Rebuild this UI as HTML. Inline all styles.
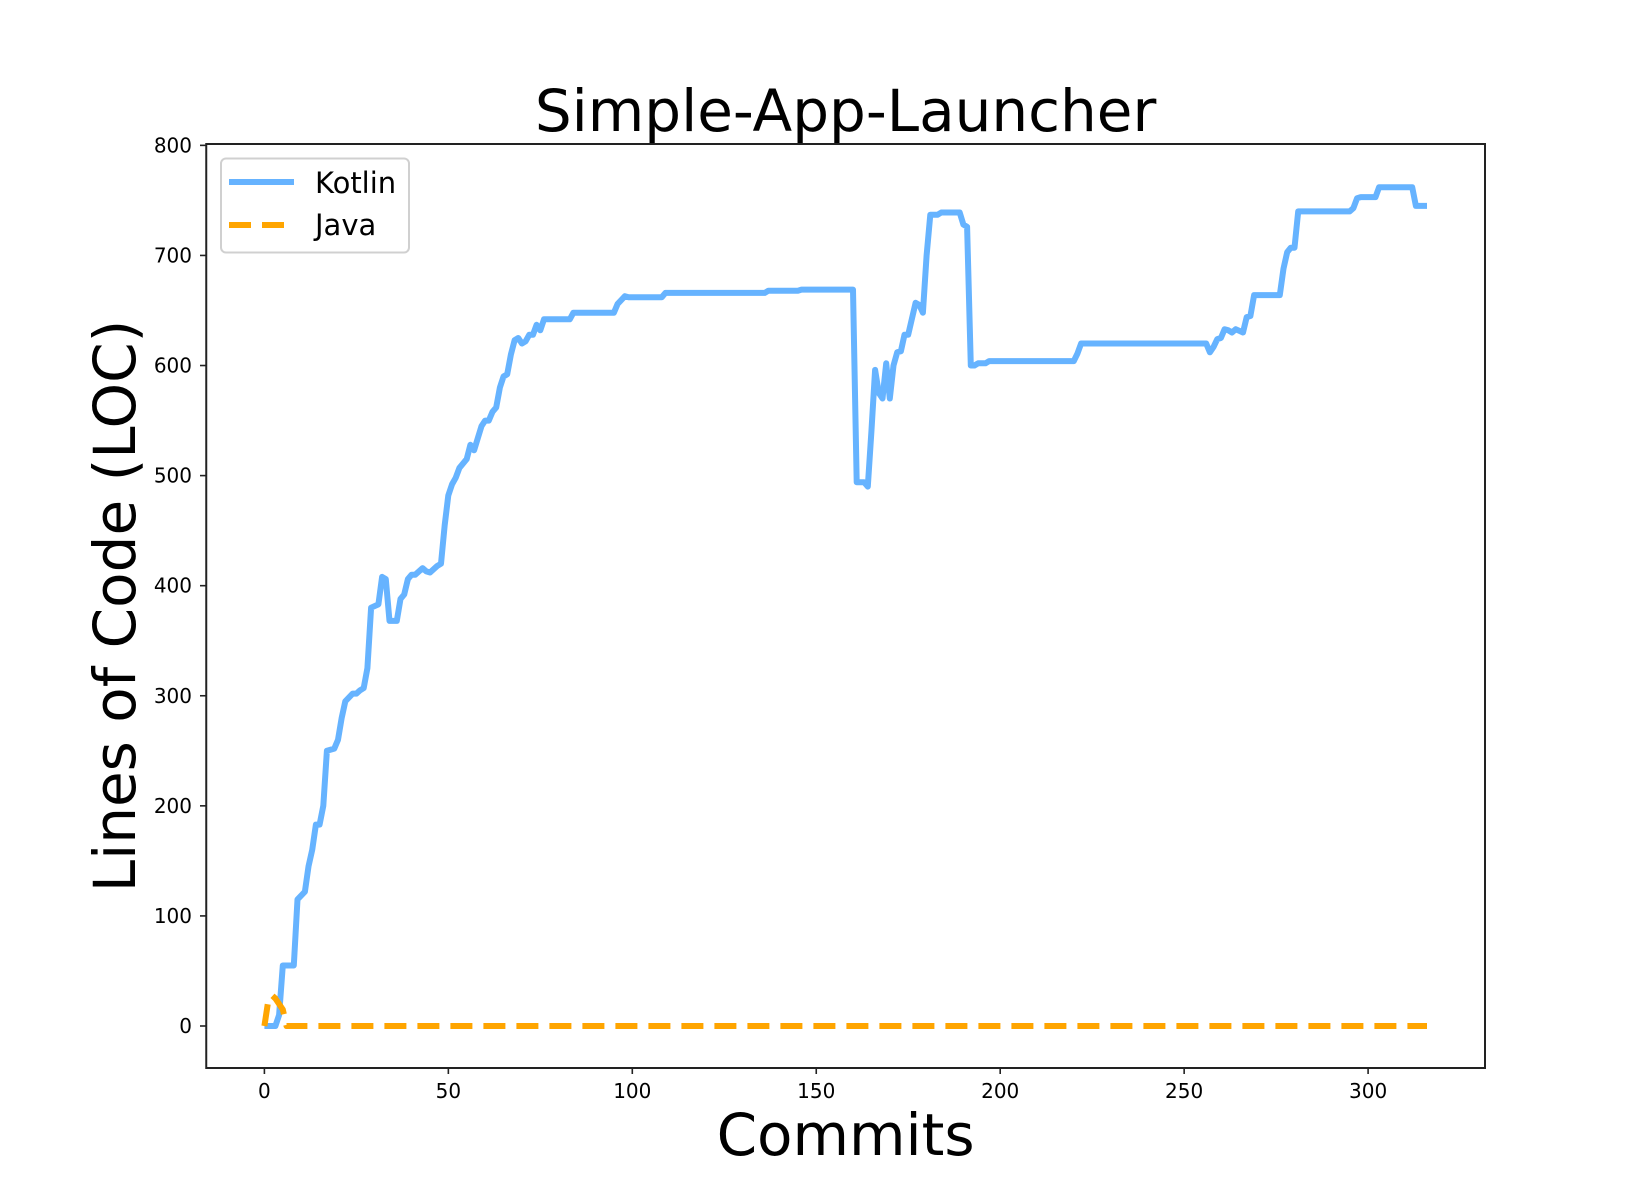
<!DOCTYPE html>
<html><head><meta charset="utf-8"><style>
html,body{margin:0;padding:0;background:#fff;width:1650px;height:1200px;overflow:hidden}
svg text{font-family:"DejaVu Sans","Liberation Sans",sans-serif;fill:#000}
</style></head><body>
<svg id="s" width="1650" height="1200" xmlns="http://www.w3.org/2000/svg">
<rect width="1650" height="1200" fill="#fff"/>
<g id="plot"></g>
<rect x="206.25" y="144" width="1278.75" height="924" fill="none" stroke="#222" stroke-width="2"/>
<g id="ticks"></g>
<text x="845.6" y="131" font-size="58" text-anchor="middle">Simple-App-Launcher</text>
<text x="845.6" y="1155" font-size="58" text-anchor="middle">Commits</text>
<text transform="translate(135,606) rotate(-90)" font-size="58" text-anchor="middle">Lines of Code (LOC)</text>
<rect x="221" y="158.5" width="188" height="94" rx="5" fill="#fff" fill-opacity="0.8" stroke="#d0d0d0" stroke-width="2"/>
<line x1="229" y1="182" x2="294" y2="182" stroke="#66b3ff" stroke-width="6"/>
<line x1="229" y1="225" x2="294" y2="225" stroke="#ffa500" stroke-width="6" stroke-dasharray="22 11"/>
<text x="315" y="193" font-size="29">Kotlin</text>
<text x="315" y="235" font-size="29">Java</text>
</svg>
<script>
var X=function(v){return 264.4+v*3.679},Y=function(v){return 1026-v*1.1008};
var k=[[0,0],[3,0],[4,10],[5,55],[8,55],[9,115],[11,122],[12,145],[13,160],[14,183],[15,183],[16,200],[17,250],[19,252],[20,260],[21,280],[22,295],[24,302],[25,302],[26,305],[27,307],[28,325],[29,380],[31,383],[32,408],[33,406],[34,368],[36,368],[37,388],[38,392],[39,406],[40,410],[41,410],[43,416],[44,413],[45,412],[47,418],[48,420],[49,455],[50,482],[51,492],[52,498],[53,507],[55,515],[56,528],[57,523],[59,545],[60,550],[61,550],[62,558],[63,562],[64,580],[65,590],[66,592],[67,610],[68,623],[69,625],[70,620],[71,622],[72,628],[73,628],[74,637],[75,632],[76,642],[83,642],[84,648],[95,648],[96,656],[98,663],[99,662],[108,662],[109,666],[136,666],[137,668],[145,668],[146,669],[160,669],[161,494],[163,494],[164,490],[165,540],[166,596],[167,575],[168,570],[169,602],[170,570],[171,600],[172,612],[173,613],[174,628],[175,628],[177,657],[178,655],[179,648],[180,700],[181,737],[183,737],[184,739],[189,739],[190,728],[191,726],[192,600],[193,600],[194,602],[196,602],[197,604],[220,604],[221,611],[222,620],[256,620],[257,612],[258,617],[259,624],[260,625],[261,633],[262,632],[263,630],[264,633],[266,630],[267,644],[268,645],[269,664],[276,664],[277,688],[278,703],[279,707],[280,707],[281,740],[295,740],[296,743],[297,752],[298,753],[302,753],[303,762],[312,762],[313,745],[316,745]];
var j=[[0,0],[1,22],[2,28],[3,25],[4,20],[5,15],[6,0],[316,0]];
function pts(a){return a.map(function(p){return X(p[0]).toFixed(1)+","+Y(p[1]).toFixed(1)}).join(" ")}
var ns="http://www.w3.org/2000/svg",g=document.getElementById("plot");
function pl(a,c,w,d){var e=document.createElementNS(ns,"polyline");e.setAttribute("points",pts(a));e.setAttribute("fill","none");e.setAttribute("stroke",c);e.setAttribute("stroke-width",w);e.setAttribute("stroke-linejoin","round");if(d)e.setAttribute("stroke-dasharray",d);g.appendChild(e)}
pl(k,"#66b3ff",6);pl(j,"#ffa500",6,"22 11");
var t=document.getElementById("ticks"),h="";
for(var v=0;v<=800;v+=100){var y=Y(v);h+='<line x1="200" y1="'+y+'" x2="206" y2="'+y+'" stroke="#222" stroke-width="1.6"/><text x="192" y="'+(y+7)+'" font-size="20" text-anchor="end">'+v+'</text>';}
for(var v=0;v<=300;v+=50){var x=X(v);h+='<line x1="'+x+'" y1="1068" x2="'+x+'" y2="1074" stroke="#222" stroke-width="1.6"/><text x="'+x+'" y="1098" font-size="20" text-anchor="middle">'+v+'</text>';}
t.innerHTML=h;
</script>
</body></html>
